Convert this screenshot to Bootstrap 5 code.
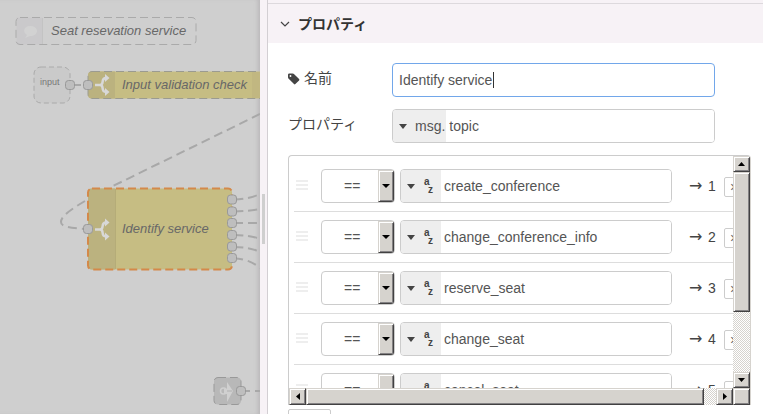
<!DOCTYPE html>
<html lang="ja">
<head>
<meta charset="utf-8">
<meta name="viewport" content="width=device-width, initial-scale=1">
<title>Node-RED</title>
<link href="https://cdn.jsdelivr.net/npm/bootstrap@5.3.0/dist/css/bootstrap.min.css" rel="stylesheet">
<style>
body{font-family:"Liberation Sans","Noto Sans CJK JP",sans-serif;font-size:14px;line-height:20px;color:#444;background:#fff}
.editor{display:grid;grid-template-columns:260px 8px minmax(0,1fr)}
.flow-canvas{background:#cfcfcf;box-shadow:inset -4px 0 4px -2px #b9b7b9}
.flow-canvas text{font-style:italic;font-size:13px;fill:#686868}
.flow-canvas .port-label{font-style:normal;font-size:9px;fill:#777}
.wire{fill:none;stroke:#a8a8a8;stroke-width:2;stroke-dasharray:9 5}
.port rect{fill:#bebebe;stroke:#999}
.splitter{background:#f7f2f6;border-right:1px solid #d3cfd3}
.grip{width:3px;height:50px;background:#cfcfcf}
.section-head{background:#f7f2f6;border:0;border-top:1px solid #ddd9dd;height:40px;padding:0 12px;color:#333;font-weight:700}
.top-edge{height:3px;background:#f7f2f6}
.edit-form{padding:20px 12px 0 20px}
.field-row{margin:0 36px 12px 0}
.field-label{width:104px;flex:none;padding-bottom:4px}
.field{border:1px solid #ccc;border-radius:4px;height:34px;background:#fff;overflow:hidden}
input.field,.field input{color:#555;font-size:14px;outline:0;min-width:0}
input.field{border-color:#72a7ea;padding:0 6px;caret-color:transparent}
.name-box{position:relative}
.caret{position:absolute;left:101px;top:9px;width:1px;height:16px;background:#333}
.field input{border:0;padding:0 3px}
.type-btn{border:0;background:#eee;color:#555;padding:0 1px 0 6px;flex:none}
.type-btn svg{flex:none}
.type-az{width:40px;padding-right:6px}
.rule-box{border:1px solid #ccc;border-bottom:0;border-right-color:#d6d3ce;border-radius:4px 4px 0 0;display:grid;grid-template-columns:minmax(0,1fr) 17px;grid-template-rows:232px 17px;overflow:hidden}
.rules{overflow:hidden;padding:5px 0 0 5px}
.rule{height:51px;border-bottom:1px solid #ddd;padding-left:2px}
.handle{width:25px;flex:none}
.op-field{width:74px;flex:none;margin-right:5px;padding:0}
.op-field select{appearance:none;border:0;background:transparent;color:#555;padding:0 0 0 22px;min-width:0;outline:0}
.bevel{background:#d6d3ce;border:1px solid;border-color:#d6d3ce #424142 #424142 #d6d3ce;box-shadow:inset 1px 1px #fff,inset -1px -1px #848284;padding:0;flex:none}
.op-arrow{width:16px;pointer-events:none}
.bar-btn{width:17px;height:16px}
.track{background:repeating-conic-gradient(#d6d3ce 0 25%,#fff 0 50%) 0 0/2px 2px}
.thumb-v{height:140px}
.thumb-h{flex:0 1 398px}
.target{width:32px;margin-left:17px;flex:none;white-space:nowrap;color:#444}
.target-arrow{font-family:"DejaVu Sans",sans-serif;font-size:16px;width:19px}
.del-btn{width:22px;height:20px;margin:1px -13px 0 3px;border:1px solid #ccc;border-radius:2px;background:#fff;flex:none;padding:0 0 0 5px;color:#666;text-align:left;line-height:16px}
.add-btn{width:43px;height:26px;border:1px solid #ccc;border-radius:2px;background:#fff;color:#888;font-size:12px;padding:0;margin-top:4px}
</style>
<script src="https://cdn.jsdelivr.net/npm/bootstrap@5.3.0/dist/js/bootstrap.bundle.min.js"></script>
</head>
<body>
<div class="editor vh-100 overflow-hidden">
<div class="flow-canvas overflow-hidden">
<svg width="260" height="414" role="img" aria-label="Flow">
<defs>
<g id="port" class="port"><rect x="-4.5" y="-4.5" width="9" height="9" rx="3"/></g>
<g id="switch" fill="none" stroke="#d8d8d8" stroke-width="2.500"><path d="M-7 0h5C3 0-2-7 4-7M-2 0C3 0-2 7 4 7"/><path d="M3-11L7.500-7 3-3zM3 3L7.500 7 3 11z" fill="#d8d8d8" stroke="none"/></g>
</defs>
<path class="wire" d="M260 114L113 186M85 201C68 211 61 217 61 222C61 227 70 228 88 229"/>
<path class="wire" d="M72 85h16M241 391h19"/>
<path class="wire" d="M234 199.500Q250 199 260 194M234 211.500Q250 211 260 209M234 223h26M234 235Q250 235 260 239M234 247Q250 247 260 252M234 258.500Q250 259 260 268"/>
<path d="M16.500 17.500h26v27h-26z" fill="#cac9cb"/><path d="M42.500 18v26" stroke="#c3c3c3"/>
<rect x="16" y="17.500" width="180" height="27" rx="4" fill="none" stroke="#aaa" stroke-dasharray="8 4"/>
<path d="M30 26c4 0 7 2 7 5s-3 5-7 5l-5 2 2-3c-5-3-3-9 3-9z" fill="#d2d2d2"/>
<text x="51" y="35">Seat resevation service</text>
<rect x="34" y="67" width="36" height="36" rx="7" fill="#cacaca" stroke="#aaa" stroke-dasharray="5 3"/>
<text class="port-label" x="40" y="85">input</text>
<rect x="88" y="71.500" width="200" height="27" rx="4" fill="#c6bd83"/>
<path d="M92 71.500h23v27H92a4 4 0 0 1-4-4v-19a4 4 0 0 1 4-4z" fill="#bbb27f"/>
<rect x="88" y="71.500" width="200" height="27" rx="4" fill="none" stroke="#9b9b91" stroke-dasharray="8 4"/>
<text x="122" y="89">Input validation check</text>
<use href="#switch" x="102" y="85"/><use href="#port" x="70" y="85"/><use href="#port" x="88" y="85"/>
<path d="M252 72h8v26h-8z" fill="#bbb27f" opacity=".5"/>
<rect x="88" y="188.500" width="144" height="81" rx="4" fill="#c6bd83"/>
<path d="M92 188.500h23v81H92a4 4 0 0 1-4-4v-73a4 4 0 0 1 4-4z" fill="#bbb27f"/><path d="M115.500 189v80" stroke="#b5ac78"/>
<rect x="88" y="188.500" width="144" height="81" rx="4" fill="none" stroke="#d4894a" stroke-width="2" stroke-dasharray="8 4"/>
<text x="122" y="233">Identify service</text>
<use href="#switch" x="102" y="229.500"/><use href="#port" x="88" y="229"/>
<use href="#port" x="232" y="199.500"/><use href="#port" x="232" y="211.500"/><use href="#port" x="232" y="223"/><use href="#port" x="232" y="235"/><use href="#port" x="232" y="246.500"/><use href="#port" x="232" y="258"/>
<rect x="214" y="377.500" width="27" height="27" rx="4" fill="#b8b8b8" stroke="#999" stroke-dasharray="8 4"/>
<path d="M227 382l6 9-6 11v-8h-3v-5h3z" fill="#d0d0d0"/><circle cx="223.500" cy="391" r="3" fill="none" stroke="#d0d0d0" stroke-width="1.500"/><path d="M227 391h5" stroke="#b0b0b0"/>
<use href="#port" x="241" y="391"/>
</svg>
</div>
<div class="splitter d-flex align-items-center justify-content-center"><div class="grip mb-0 mt-4"></div></div>
<main class="overflow-hidden">
<div class="top-edge"></div>
<button type="button" class="section-head w-100 d-flex align-items-center text-start"><svg class="me-2" width="10" height="8" aria-hidden="true"><path d="M1 2l4 4 4-4" fill="none" stroke="#444" stroke-width="1.200"/></svg><span>プロパティ</span></button>
<form class="edit-form">
<div class="field-row d-flex align-items-center">
<label class="field-label" for="node-name"><svg width="12" height="12" viewBox="0 0 13 12" aria-hidden="true"><path d="M0 1.500Q0 0 1.500 0H5q1 0 2 1l5 5q.7.700 0 1.500L8 11.500q-.8.700-1.500 0L1 6Q0 5 0 4z" fill="#444"/><circle cx="2.700" cy="2.700" r="1" fill="#fff"/></svg> 名前</label>
<div class="name-box flex-grow-1 d-flex"><input id="node-name" class="field flex-grow-1" value="Identify service"><span class="caret"></span></div>
</div>
<div class="field-row d-flex align-items-center">
<label class="field-label" for="prop">プロパティ</label>
<div class="field flex-grow-1 d-flex"><button type="button" class="type-btn d-flex align-items-center"><svg class="me-2" width="8" height="5" aria-hidden="true"><path d="M0 0h8L4 5z" fill="#444"/></svg>msg.</button><input id="prop" class="flex-grow-1" value="topic"></div>
</div>
<div class="rule-box">
<div class="rules" id="rules"></div>
<div class="track d-flex flex-column">
<button type="button" class="bevel bar-btn d-flex align-items-center justify-content-center" aria-label="Up"><svg width="7" height="4"><path d="M0 4h7L3.500 0z"/></svg></button>
<div class="bevel thumb-v"></div>
<button type="button" class="bevel bar-btn mt-auto d-flex align-items-center justify-content-center" aria-label="Down"><svg width="7" height="4"><path d="M0 0h7L3.500 4z"/></svg></button>
</div>
<div class="track d-flex">
<button type="button" class="bevel bar-btn h-100 d-flex align-items-center justify-content-center" aria-label="Left"><svg width="4" height="7"><path d="M4 0v7L0 3.500z"/></svg></button>
<div class="bevel thumb-h"></div>
<button type="button" class="bevel bar-btn h-100 ms-auto d-flex align-items-center justify-content-center" aria-label="Right"><svg width="4" height="7"><path d="M0 0v7L4 3.500z"/></svg></button>
</div>
<div class="bevel"></div>
</div>
<button type="button" class="add-btn">+ 追加</button>
</form>
</main>
</div>
<script>
document.getElementById('rules').innerHTML=['create_conference','change_conference_info','reserve_seat','change_seat','cancel_seat'].map((v,i)=>`
<div class="rule d-flex align-items-center">
<div class="handle"><svg class="d-block" width="12" height="12" aria-hidden="true"><path d="M0 1h12M0 5h12M0 9h12" stroke="#eee" stroke-width="2"/></svg></div>
<div class="field op-field d-flex"><select class="flex-grow-1" aria-label="演算子 ${i+1}"><option>==</option></select><span class="bevel op-arrow d-flex align-items-center justify-content-center"><svg width="8" height="4"><path d="M0 0h8L4 4z"/></svg></span></div>
<div class="field flex-grow-1 d-flex"><button type="button" class="type-btn type-az d-flex align-items-center justify-content-between" aria-label="string"><svg width="8" height="5"><path d="M0 0h8L4 5z" fill="#444"/></svg><svg width="12" height="18" font-size="10" font-weight="700" fill="#444"><text x="1" y="8">a</text><text x="5" y="16">z</text></svg></button><input class="flex-grow-1" aria-label="値 ${i+1}" value="${v}"></div>
<span class="target d-flex align-items-center"><span class="target-arrow">→</span>${i+1}</span><button type="button" class="del-btn" aria-label="削除">×</button>
</div>`).join('');
</script>
</body>
</html>
